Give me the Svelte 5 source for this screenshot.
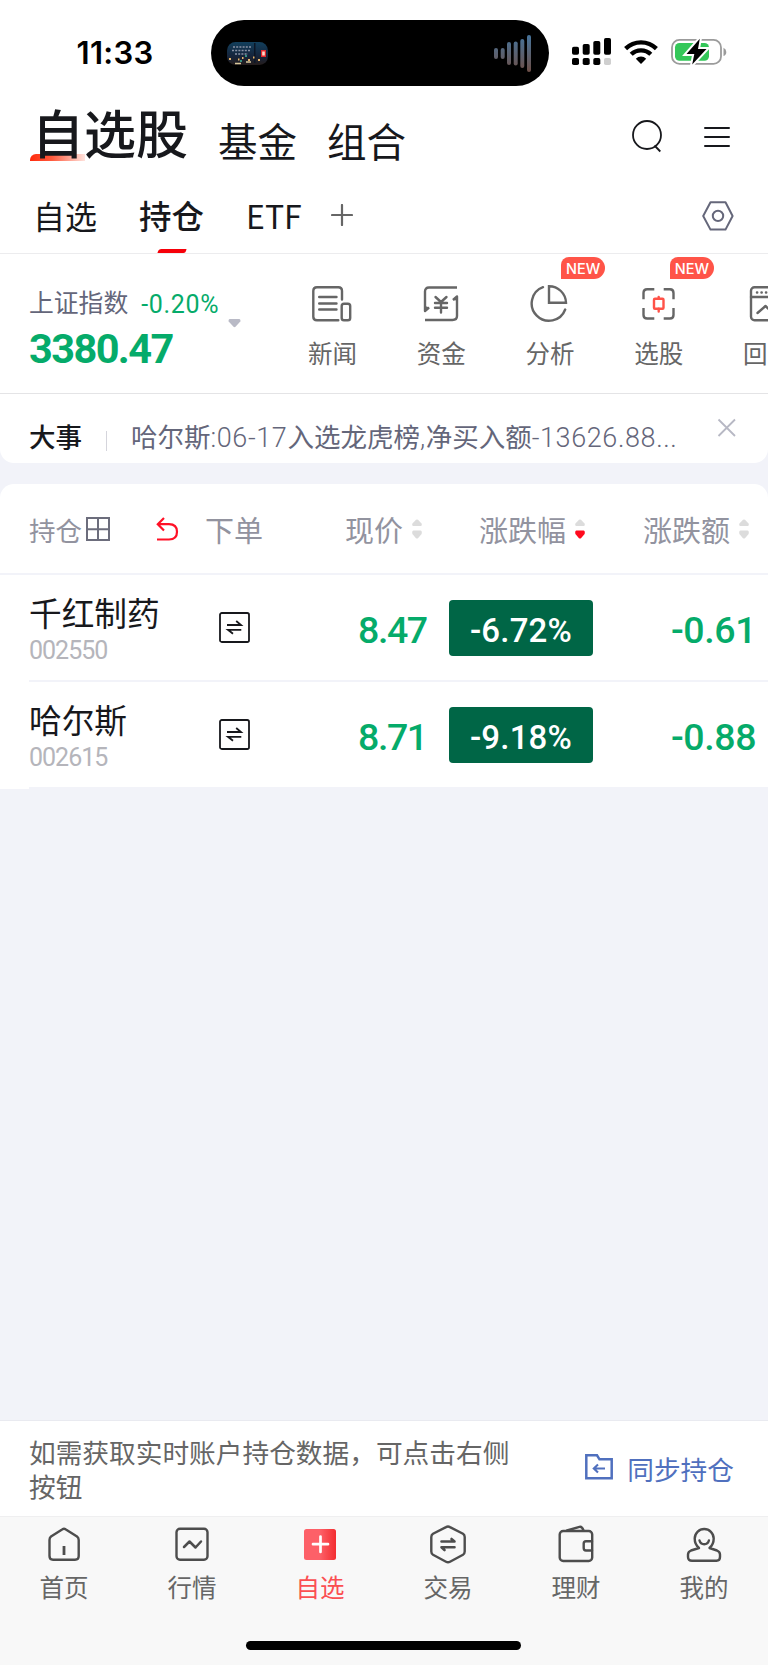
<script lang="ts">
  const shortcuts = [
    { id: 'news', label: '新闻', isNew: false },
    { id: 'funds', label: '资金', isNew: false },
    { id: 'analysis', label: '分析', isNew: true },
    { id: 'picker', label: '选股', isNew: true },
    { id: 'backtest', label: '回测', isNew: false }
  ];

  const holdings = [
    { name: '千红制药', code: '002550', price: '8.47', percent: '-6.72%', change: '-0.61' },
    { name: '哈尔斯', code: '002615', price: '8.71', percent: '-9.18%', change: '-0.88' }
  ];

  const navItems = [
    { id: 'home', label: '首页' },
    { id: 'market', label: '行情' },
    { id: 'watch', label: '自选' },
    { id: 'trade', label: '交易' },
    { id: 'wealth', label: '理财' },
    { id: 'me', label: '我的' }
  ];

  let activeNav = $state('watch');
  let showNotice = $state(true);
</script>

{#snippet sorter(down: boolean)}
  <svg class="sorter" width="10" height="20" viewBox="0 0 10 20">
    <path d="M4 .8Q5 0 6 .8L9.6 4.6Q10.3 7 8.6 7H1.4Q-.3 7 .4 4.6Z" fill="#dcdcdc" />
    <path d="M4 19.2Q5 20 6 19.2L9.6 14.9Q10.3 11.5 8.6 11.5H1.4Q-.3 11.5 .4 14.9Z" fill={down ? '#ff0a1e' : '#dcdcdc'} />
  </svg>
{/snippet}

<div class="screen">
  <header class="status-bar">
    <span class="time">11:33</span>
    <div class="island">
      <svg width="41" height="23" viewBox="0 0 41 23">
        <defs>
          <linearGradient id="night" x1="0" y1="0" x2="0" y2="1">
            <stop offset="0" stop-color="#123f5c" />
            <stop offset=".6" stop-color="#16253c" />
            <stop offset="1" stop-color="#241c1c" />
          </linearGradient>
        </defs>
        <rect width="41" height="23" rx="8.5" fill="url(#night)" />
        <path d="M6 5H25M5 8.5H24M8 12H21" stroke="#8b93a6" stroke-width="1.5" stroke-dasharray="2 1.2" />
        <rect x="27" y="1" width="1.5" height="20" fill="#0c1626" />
        <rect x="34" y="8" width="5" height="7" fill="#e0282d" />
        <rect x="35.2" y="9.5" width="2.6" height="4" fill="#ffd9c9" />
        <path d="M2 17H4M11 17.5H12.500M15 16H16.500M21 18H23M26 15.500H27.500M31 18H33" stroke="#e8b56a" stroke-width="2" />
        <path d="M8 21.500H14M19 20H24" stroke="#d8c79a" stroke-width="1.3" />
        <path d="M13 19H15M18 14H20" stroke="#3fb59c" stroke-width="1.6" />
      </svg>
      <svg width="38" height="37" viewBox="0 0 38 37">
        <defs>
          <linearGradient id="wave" x1="0" y1="0" x2="0" y2="37" gradientUnits="userSpaceOnUse">
            <stop offset="0" stop-color="#46749c" />
            <stop offset="1" stop-color="#6e4f47" />
          </linearGradient>
        </defs>
        <g fill="url(#wave)">
          <rect x="0" y="13" width="4" height="11" rx="2" />
          <rect x="6.700" y="13" width="4" height="11" rx="2" />
          <rect x="13" y="7" width="4" height="23" rx="2" />
          <rect x="19.700" y="6.500" width="4" height="24" rx="2" />
          <rect x="26.300" y="4" width="4" height="29" rx="2" />
          <rect x="33" y="0" width="4" height="37" rx="2" />
        </g>
      </svg>
    </div>
    <div class="status-icons">
      <svg width="40" height="28" viewBox="0 0 40 28">
        <rect x="0" y="8.700" width="7" height="8" rx="1.800" />
        <rect x="10.700" y="6" width="7" height="10.700" rx="1.800" />
        <rect x="21.300" y="3" width="7" height="13.700" rx="1.800" />
        <rect x="32" y="0" width="7" height="16.700" rx="1.800" />
        <rect x="0" y="20" width="7" height="7" rx="1.800" />
        <rect x="10.700" y="20" width="7" height="7" rx="1.800" />
        <rect x="21.300" y="20" width="7" height="7" rx="1.800" />
        <rect x="32" y="20" width="7" height="7" rx="1.800" fill="#cfcfcf" />
      </svg>
      <svg width="34" height="26" viewBox="0 0 34 26">
        <g fill="none" stroke="#000" stroke-width="4.300">
          <path d="M1.600 9.600A22 22 0 0 1 32.400 9.600" />
          <path d="M7.200 15.300A14 14 0 0 1 26.800 15.300" />
        </g>
        <path d="M17 25L11.800 19.700A7.500 7.500 0 0 1 22.200 19.700Z" />
      </svg>
      <svg width="56" height="28" viewBox="0 0 56 28">
        <rect x="1" y="1.900" width="49" height="24" rx="7.500" fill="none" stroke="#9b9b9b" stroke-width="1.800" />
        <path d="M52.500 9.800Q55.300 11 55.300 14T52.500 18Z" fill="#9b9b9b" />
        <rect x="4" y="5" width="34" height="17.800" rx="4.500" fill="#34c759" />
        <path d="M28.800 .8L15.500 16H23.300L21.200 26.500L35.500 11H27Z" fill="#000" stroke="#fff" stroke-width="4" paint-order="stroke" />
      </svg>
    </div>
  </header>

  <nav class="main-nav">
    <span class="main-tab current">自选股</span>
    <span class="main-tab">基金</span>
    <span class="main-tab">组合</span>
    <div class="main-actions">
      <svg width="30" height="33" viewBox="0 0 30 33" fill="none" stroke="#17181c" stroke-width="1.800">
        <circle cx="15" cy="15" r="14" />
        <path d="M22.500 25.500L28.300 31.500" />
      </svg>
      <svg width="26" height="22" viewBox="0 0 26 22">
        <path d="M1 2H25M1 11H25M1 20H25" stroke="#17181c" stroke-width="2" stroke-linecap="round" />
      </svg>
    </div>
  </nav>

  <nav class="sub-nav">
    <span class="sub-tab">自选</span>
    <span class="sub-tab current">持仓</span>
    <span class="sub-tab">ETF</span>
    <svg class="add" width="22" height="22" viewBox="0 0 22 22">
      <path d="M1 11H21M11 1V21" stroke="#666" stroke-width="2.200" stroke-linecap="round" />
    </svg>
    <svg class="settings" width="32" height="30" viewBox="0 0 32 30" fill="none" stroke="#65677a" stroke-width="2" stroke-linejoin="round">
      <path d="M8.500 1.200H23.500L30.600 15L23.500 28.600H8.500L1.200 15Z" />
      <circle cx="16" cy="14.900" r="5.200" />
    </svg>
  </nav>

  <section class="overview">
    <div class="index">
      <div class="index-top">
        <span class="index-name">上证指数</span>
        <span class="index-percent">-0.20%</span>
      </div>
      <div class="index-value">3380.47</div>
      <svg class="caret" width="13" height="9" viewBox="0 0 13 9">
        <path d="M1.500 0H11.500Q13 .6 12.300 2.500L7.500 7.700Q6.500 8.600 5.500 7.700L.7 2.500Q0 .6 1.500 0Z" fill="#b9bac6" />
      </svg>
    </div>
    <div class="shortcuts">
      {#each shortcuts as item (item.id)}
        <div class="shortcut">
          {#if item.isNew}<span class="badge">NEW</span>{/if}
          <svg width="40" height="38" viewBox="0 0 40 38" fill="none" stroke="#666" stroke-width="2.400" stroke-linecap="round" stroke-linejoin="round">
            {#if item.id === 'news'}
              <path d="M30 14.500V6Q30 2.300 26.300 2.300H5Q1.300 2.300 1.300 6V31.700Q1.300 35.300 5 35.300H26.300" />
              <path d="M7.200 12H24.500M7.200 18.500H24.500M7.200 24.500H24.500" />
              <rect x="29.700" y="18.700" width="8.500" height="16.600" rx="2.300" />
            {:else if item.id === 'funds'}
              <path d="M36 2.500H8Q4 2.500 4 6.500V26L8 22.500M4 35H31.500Q36 35 36 31V11.500L32 15" stroke-linecap="butt" />
              <path d="M4 21L8.500 22.500L4 27ZM36 11L31.500 15L36 15.500Z" fill="#666" stroke="none" />
              <path d="M14.500 12L20 17L25.500 12M14 18H26M14 22.700H26M20 17V27.500" />
            {:else if item.id === 'analysis'}
              <path d="M13 2.200A17.300 17.300 0 1 0 35.200 24.500" />
              <path d="M19 1.200V17.700H36A17 17 0 0 0 19 1.200Z" stroke-linejoin="miter" />
            {:else if item.id === 'picker'}
              <path d="M4.500 14.300V8Q4.500 4.300 8.200 4.300H15.300M24.700 4.300H31Q34.500 4.300 34.500 8V14.300M34.500 23V30Q34.500 33.500 31 33.500H24.700M15.300 33.500H8.200Q4.500 33.500 4.500 30V23" stroke-linecap="butt" />
              <g stroke="#ff5248">
                <rect x="15" y="13.800" width="9.500" height="10" rx="1" />
                <path d="M19.700 12V13.800M19.700 23.800V26.500" />
              </g>
            {:else}
              <rect x="3" y="2.300" width="34" height="33" rx="3.500" />
              <path d="M3 12H37M9.500 28L17.500 21L23 26L31 18.500" />
              <path d="M9 7.500H9.200M13.500 7.500H13.700M18 7.500H18.200" stroke-width="2.500" />
            {/if}
          </svg>
          <span>{item.label}</span>
        </div>
      {/each}
    </div>
  </section>

  {#if showNotice}
    <section class="notice">
      <strong>大事</strong>
      <i></i>
      <p>哈尔斯<span class="num">:06-17</span>入选龙虎榜<span class="num">,</span>净买入额<span class="num">-13626.88...</span></p>
      <button aria-label="关闭" onclick={() => (showNotice = false)}>
        <svg width="20" height="20" viewBox="0 0 20 20">
          <path d="M1.500 1.500L18 18M18 1.500L1.500 18" stroke="#b7b8c4" stroke-width="1.800" />
        </svg>
      </button>
    </section>
  {/if}

  <section class="table">
    <div class="thead">
      <div class="cell-name">
        <span>持仓</span>
        <svg width="24" height="24" viewBox="0 0 24 24" fill="none" stroke="#6c6d7c" stroke-width="2">
          <path d="M1 1H23V23H1ZM12 1V23M1 12.300H23" />
        </svg>
        <svg class="undo" width="23" height="24" viewBox="0 0 23 24" fill="none" stroke="#ff1026" stroke-width="2.200">
          <path d="M8 1L1.800 7.200L8 13.500M1.800 7.200H13Q21 7.200 21 14.800T13 22.500H1" />
        </svg>
      </div>
      <div class="cell-order">下单</div>
      <div class="cell-price">现价{@render sorter(false)}</div>
      <div class="cell-percent">涨跌幅{@render sorter(true)}</div>
      <div class="cell-change">涨跌额{@render sorter(false)}</div>
    </div>
    {#each holdings as stock (stock.code)}
      <div class="row">
        <div class="stock">
          <span class="stock-name">{stock.name}</span>
          <span class="stock-code">{stock.code}</span>
        </div>
        <svg class="swap" width="31" height="31" viewBox="0 0 31 31" fill="none" stroke="#17181c" stroke-width="1.800">
          <rect x="1" y="1" width="29" height="29" rx="1.800" />
          <path d="M8 13H22L17.200 9M22.300 17.800H9L14 21.800" />
        </svg>
        <span class="price">{stock.price}</span>
        <span class="percent">{stock.percent}</span>
        <span class="change">{stock.change}</span>
      </div>
    {/each}
  </section>

  <section class="sync">
    <p>如需获取实时账户持仓数据，可点击右侧按钮</p>
    <button>
      <svg width="28" height="26" viewBox="0 0 28 26" fill="none" stroke="#5070be" stroke-width="2.500">
        <path d="M1.300 1.300H12L14.500 5.300H26.700V24.300H1.300Z" />
        <path d="M20 14.500H9M13 10.500L8.800 14.500L13 18.500" stroke-width="2.100" />
      </svg>
      同步持仓
    </button>
  </section>

  <nav class="tab-bar">
    {#each navItems as item (item.id)}
      <button class:active={activeNav === item.id} onclick={() => (activeNav = item.id)}>
        <svg width="40" height="40" viewBox="0 0 40 40" fill="none" stroke="#4d4d4d" stroke-width="2.400" stroke-linecap="round" stroke-linejoin="round">
          {#if item.id === 'home'}
            <path d="M18.500 4.300Q20 3.300 21.500 4.300L33 11.500Q34.700 12.800 34.700 15V31Q34.700 34.700 31 34.700H9Q5.500 34.700 5.500 31V15Q5.500 12.800 7 11.500Z" />
            <path d="M20 21V30" stroke-width="2.800" stroke-linecap="butt" />
          {:else if item.id === 'market'}
            <rect x="4.500" y="3.800" width="31" height="31" rx="3.500" />
            <path d="M12 22L17.500 16.500L23.500 22.500L29 16.500" stroke-width="2.500" />
          {:else if item.id === 'watch'}
            <defs>
              <linearGradient id="hot">
                <stop offset=".5" stop-color="#fd6068" />
                <stop offset="1" stop-color="#f32d30" />
              </linearGradient>
            </defs>
            <rect x="4" y="4" width="32" height="31" rx="2.500" fill="url(#hot)" stroke="none" />
            <path d="M13 19.200H28M20.500 11.500V27" stroke="#fff" stroke-width="2.700" />
          {:else if item.id === 'trade'}
            <path d="M18 2.100Q20 .9 22 2.100L35 8.700Q36.700 9.800 36.700 12V26.500Q36.700 28.700 35 29.700L22 36.700Q20 37.900 18 36.700L5 29.700Q3.300 28.700 3.300 26.500V12Q3.300 9.800 5 8.700Z" />
            <path d="M13.500 16.500H26.500L23.500 14M26.500 22.200H13.500L16.500 25" stroke-width="2.600" />
          {:else if item.id === 'wealth'}
            <rect x="3.700" y="6" width="32.500" height="30" rx="3.500" />
            <path d="M11 5.500L23.500 1.900Q26 1.200 27.500 5.500M36 16.200H30Q27.700 16.200 27.700 18.500V23Q27.700 25.500 30 25.500H36" />
          {:else}
            <path d="M15 23Q10.700 19.500 10.700 13.500A9.500 9.500 0 0 1 29.700 13.500Q29.700 19.500 25.500 23L33 25.500Q36 26.700 36 29.500V32Q36 35.700 32.500 35.700H8Q4 35.700 4 32V29.500Q4 26.700 7 25.500Z" />
            <path d="M15.500 15.500Q16.500 19.200 20.200 19.200T24.900 15.500" />
          {/if}
        </svg>
        <span>{item.label}</span>
      </button>
    {/each}
    <div class="home-indicator"></div>
  </nav>
</div>

<style>
  :global(body) {
    margin: 0;
    background: #f2f3f9;
  }

  .screen {
    display: flex;
    flex-direction: column;
    width: 768px;
    height: 1665px;
    overflow: hidden;
    background: #f2f3f9;
    color: #17181c;
    font-family: 'Noto Sans CJK SC', sans-serif;
  }

  .screen * {
    box-sizing: border-box;
  }

  svg {
    display: block;
    flex: none;
  }

  p {
    margin: 0;
  }

  button {
    padding: 0;
    border: none;
    background: none;
    font: inherit;
    color: inherit;
    cursor: pointer;
  }

  /* Status bar */
  .status-bar {
    display: flex;
    flex: none;
    height: 96px;
    background: #fff;
  }

  .time {
    width: 135px;
    margin-left: 76.500px;
    padding-top: 35px;
    font: 600 31px/36px Inter, sans-serif;
    letter-spacing: 0.300px;
    color: #000;
  }

  .island {
    display: flex;
    justify-content: space-between;
    align-items: center;
    width: 338px;
    height: 66px;
    margin: 20px 0 0 -0.500px;
    padding: 0 17px 0 16px;
    border-radius: 33px;
    background: #000;
  }

  .status-icons {
    display: flex;
    align-items: center;
    gap: 12px;
    height: 28px;
    margin: 38px 0 0 23px;
  }

  .status-icons svg:last-child {
    margin-left: 1px;
  }

  /* Main tabs */
  .main-nav {
    display: flex;
    flex: none;
    height: 84px;
    padding-left: 32px;
    background: #fff;
  }

  .main-tab {
    padding-top: 16px;
    margin-right: 30px;
    font-size: 39.500px;
    line-height: 56px;
    white-space: nowrap;
  }

  .main-tab.current {
    position: relative;
    z-index: 0;
    margin-right: 30px;
    padding-top: 8px;
    font-size: 52px;
    font-weight: 500;
    line-height: 56px;
  }

  .main-tab.current::before {
    content: '';
    position: absolute;
    z-index: -1;
    left: -2px;
    top: 58px;
    width: 55px;
    height: 7px;
    border-radius: 6px 0 0 0;
    background: linear-gradient(90deg, #ff2a0c, #ff5b3e 40%, #ffe3dd);
  }

  .main-actions {
    display: flex;
    align-items: center;
    gap: 42px;
    height: 33px;
    margin: 24px 38px 0 auto;
  }

  /* Sub tabs */
  .sub-nav {
    display: flex;
    flex: none;
    height: 74px;
    padding: 16px 34px 0 33px;
    border-bottom: 1px solid #ececee;
    background: #fff;
  }

  .sub-tab {
    position: relative;
    margin-right: 42px;
    font-size: 32px;
    line-height: 38px;
  }

  .sub-tab.current {
    margin-right: 42px;
    font-size: 32.500px;
    font-weight: 500;
  }

  .sub-tab.current::after {
    content: '';
    position: absolute;
    left: 19px;
    top: 53px;
    width: 28px;
    height: 4px;
    border-radius: 3px 0 2px 0;
    background: #f60009;
    transform: skewX(-15deg);
  }

  .sub-nav .add {
    margin: 8px 0 0 -13px;
  }

  .sub-nav .settings {
    margin: 5px 0 0 auto;
  }

  /* Index and shortcuts */
  .overview {
    display: flex;
    flex: none;
    height: 140px;
    border-bottom: 1px solid #e4e4e6;
    background: #fff;
    overflow: hidden;
  }

  .index {
    position: relative;
    flex: none;
    width: 278px;
    padding: 29px 0 0 29px;
  }

  .index-top {
    display: flex;
    align-items: center;
    height: 36px;
  }

  .index-name {
    margin-right: 13px;
    color: #64667a;
    font-size: 24.800px;
  }

  .index-percent {
    padding-top: 8px;
    color: #05ab6a;
    font: 400 25px/30px Roboto, sans-serif;
    letter-spacing: 0.700px;
  }

  .index-value {
    margin-top: 6px;
    color: #05ab6a;
    font: 700 41.500px/48px Roboto, sans-serif;
    letter-spacing: -1.600px;
  }

  .caret {
    position: absolute;
    left: 228px;
    top: 65px;
  }

  .shortcuts {
    display: flex;
  }

  .shortcut {
    position: relative;
    display: flex;
    flex: none;
    flex-direction: column;
    align-items: center;
    width: 108.800px;
    padding-top: 31px;
    color: #666;
    font-size: 24.500px;
    line-height: 36px;
  }

  .shortcut span:last-child {
    margin-top: 12px;
  }

  .badge {
    position: absolute;
    left: 65.500px;
    top: 3px;
    width: 44px;
    height: 22px;
    border-radius: 8px 11px 11px 0;
    background: #ff5448;
    color: #fff;
    font: 500 14.500px/23px Inter, sans-serif;
    text-align: center;
  }

  /* Notice */
  .notice {
    display: flex;
    flex: none;
    height: 69px;
    padding-left: 29px;
    border-radius: 0 0 14px 14px;
    background: #fff;
    line-height: 40px;
  }

  .notice strong {
    padding-top: 22px;
    font-size: 26.500px;
    font-weight: 500;
  }

  .notice i {
    width: 1px;
    height: 20px;
    margin: 37px 24px 0;
    background: #d5d5dc;
  }

  .notice p {
    padding-top: 22px;
    color: #64667a;
    font-size: 26.500px;
    white-space: nowrap;
  }

  .notice .num {
    font-family: Roboto, sans-serif;
    font-weight: 300;
    font-size: 27px;
    letter-spacing: 0.600px;
  }

  .notice button {
    height: 20px;
    margin: 24px 31px 0 auto;
  }

  /* Holdings table */
  .table {
    flex: none;
    margin-top: 21px;
    border-radius: 14px 14px 0 0;
    background: #fff;
  }

  .thead,
  .row {
    display: grid;
    grid-template-columns: 177px 139px 104px 187px 132px;
  }

  .thead {
    height: 91px;
    padding: 25px 0 0 29px;
    border-bottom: 2px solid #f2f3f9;
    color: #92939f;
    font-size: 29px;
    line-height: 40px;
  }

  .thead > div {
    display: flex;
    align-items: center;
    height: 40px;
    white-space: nowrap;
  }

  .thead .cell-name {
    margin-top: 1px;
    font-size: 26.500px;
  }

  .cell-name span {
    margin-right: 4px;
  }

  .cell-name svg {
    position: relative;
    top: -1px;
  }

  .undo {
    margin-left: 46px;
  }

  .cell-order {
    margin-left: -1px;
  }

  .cell-percent {
    padding-left: 30px;
  }

  .cell-change {
    padding-left: 7px;
  }

  .sorter {
    margin-left: 9px;
  }

  .row {
    position: relative;
    height: 107px;
    padding-left: 29px;
  }

  .row::after {
    content: '';
    position: absolute;
    left: 29px;
    right: 0;
    bottom: 0;
    height: 2px;
    background: #f2f3f9;
  }

  .stock {
    display: flex;
    flex-direction: column;
    padding-top: 17px;
  }

  .stock-name {
    font-size: 32.700px;
    line-height: 40px;
  }

  .stock-code {
    margin-top: 4px;
    color: #b5b5bb;
    font: 400 25px/30px Roboto, sans-serif;
    letter-spacing: -1px;
  }

  .swap {
    margin: 37px 0 0 13px;
  }

  .price,
  .change {
    padding-top: 33px;
    color: #05ab6a;
    font: 500 37.500px/44px Roboto, sans-serif;
    letter-spacing: -0.400px;
  }

  .price {
    margin-left: 13px;
    letter-spacing: -1.400px;
  }

  .percent {
    width: 144px;
    height: 56px;
    margin-top: 25px;
    border-radius: 4px;
    background: #006646;
    color: #fff;
    font: 500 33px/61px Roboto, sans-serif;
    letter-spacing: 0.200px;
    text-align: center;
  }

  .change {
    margin-left: 35px;
    white-space: nowrap;
  }

  /* Sync hint */
  .sync {
    display: flex;
    flex: none;
    justify-content: space-between;
    height: 96px;
    margin-top: auto;
    padding: 0 34px 0 29px;
    border-top: 1px solid #e9eaf0;
    background: #fff;
    color: #666;
    font-size: 26.700px;
    line-height: 34px;
  }

  .sync p {
    width: 490px;
    padding-top: 14px;
  }

  .sync button {
    display: flex;
    align-items: center;
    gap: 14px;
    height: 34px;
    margin-top: 31px;
    color: #5070be;
  }

  .sync button svg {
    margin-top: -4px;
  }

  /* Bottom tab bar */
  .tab-bar {
    position: relative;
    display: grid;
    flex: none;
    grid-template-columns: repeat(6, 128px);
    height: 149px;
    border-top: 1px solid #efeff0;
    background: #f8f8f8;
  }

  .tab-bar button {
    display: flex;
    flex-direction: column;
    align-items: center;
    padding-top: 8px;
    color: #666;
    font-size: 24.500px;
    line-height: 36px;
  }

  .tab-bar button span {
    margin-top: 4px;
  }

  .tab-bar button.active {
    color: #fb4f52;
  }

  .home-indicator {
    position: absolute;
    left: 246px;
    bottom: 15px;
    width: 275px;
    height: 9px;
    border-radius: 5px;
    background: #000;
  }
</style>
